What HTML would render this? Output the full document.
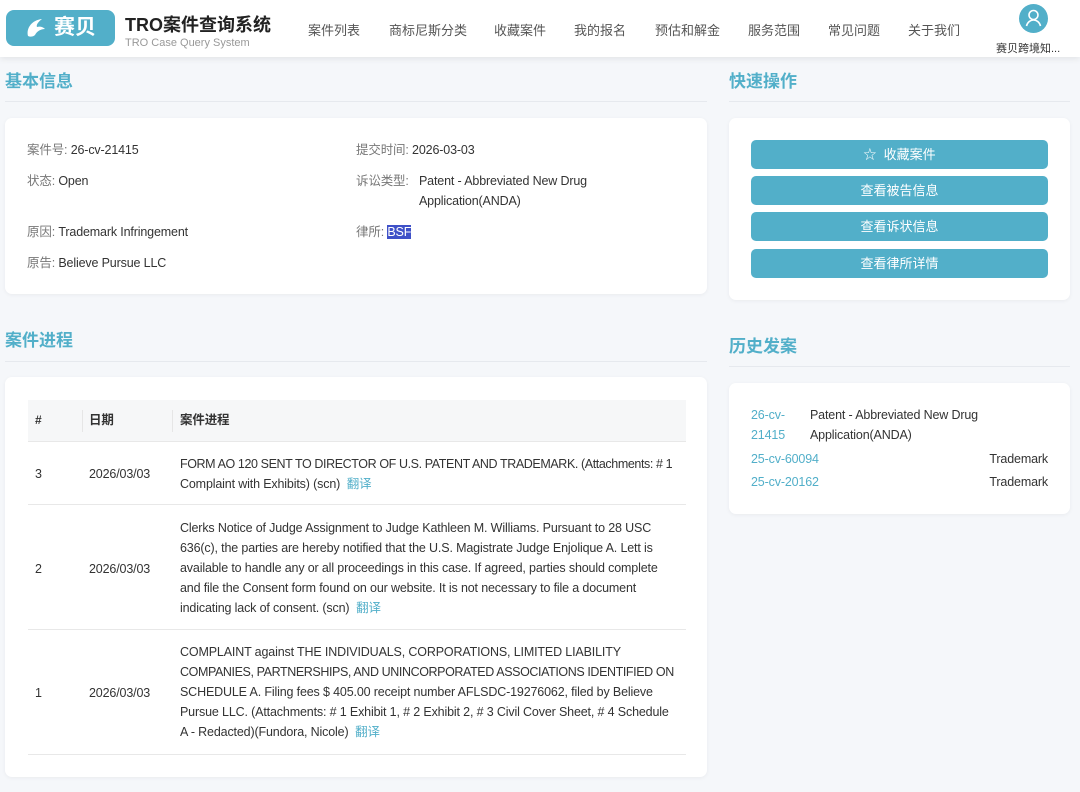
<!DOCTYPE html>
<html><head><meta charset="utf-8"><style>
*{box-sizing:border-box;margin:0;padding:0}
body{width:1080px;height:792px;overflow:hidden;background:#f5f7fa;font-family:"Liberation Sans","Noto Sans CJK SC",sans-serif;color:#333;font-size:13px;position:relative}
.hdr{position:absolute;left:0;top:0;width:1080px;height:57px;background:#fff;box-shadow:0 2px 6px rgba(0,0,0,.08)}
.logo{position:absolute;left:6px;top:10px;width:109px;height:36px;background:#52afc9;border-radius:8px;color:#fff;font-weight:bold;font-size:21px;line-height:36px;padding-left:48px}
.brand{position:absolute;left:125px;top:11px;font-size:18px;font-weight:bold;color:#222}
.brand small{display:block;font-size:11px;font-weight:normal;color:#999;margin-top:0}
.nav{position:absolute;top:20px;font-size:13px;color:#555}
.av{position:absolute;left:1019px;top:4px;width:29px;height:29px;border-radius:50%;background:#52afc9}
.uname{position:absolute;left:996px;top:40px;font-size:11px;color:#333}
.ttl{position:absolute;font-size:17px;font-weight:bold;color:#52afc9}
.ln{position:absolute;height:1px;background:#e6e9ee}
.card{position:absolute;background:#fff;border-radius:7px;box-shadow:0 1px 4px rgba(0,0,0,.05)}
.t{position:absolute;line-height:20px;font-size:12.5px;letter-spacing:-0.15px;color:#333}
.nw{white-space:nowrap}
.c{letter-spacing:-0.4px}
.lb{color:#777}
.btn{position:absolute;left:751px;width:297px;height:29px;background:#52afc9;border-radius:5px;color:#fff;text-align:center;line-height:29px;font-size:13px}
.blue{color:#52afc9}
.row{position:absolute;left:28px;width:658px;border-bottom:1px solid #e8e8e8}
</style></head><body>
<div class="hdr">
<div class="logo"><svg style="position:absolute;left:18px;top:6px" width="26" height="24" viewBox="0 0 26 24"><path d="M4 20C2 12 8 4 18 3c-4 3-6 6-5 8 3-1 6 0 8 2-4 0-8 2-10 6-2 2-5 2-7 1z" fill="#fff"/></svg>赛贝</div>
<div class="brand">TRO案件查询系统<small>TRO Case Query System</small></div>
<div class="nav" style="left:308px">案件列表</div>
<div class="nav" style="left:389px">商标尼斯分类</div>
<div class="nav" style="left:494px">收藏案件</div>
<div class="nav" style="left:574px">我的报名</div>
<div class="nav" style="left:655px">预估和解金</div>
<div class="nav" style="left:748px">服务范围</div>
<div class="nav" style="left:828px">常见问题</div>
<div class="nav" style="left:908px">关于我们</div>
<div class="av"><svg width="29" height="29" viewBox="0 0 29 29"><circle cx="14.5" cy="11" r="4.5" fill="none" stroke="#fff" stroke-width="1.6"/><path d="M7.5 22c1-4 4-6 7-6s6 2 7 6" fill="none" stroke="#fff" stroke-width="1.6"/></svg></div>
<div class="uname">赛贝跨境知...</div>
</div>

<div class="ttl" style="left:5px;top:67px">基本信息</div>
<div class="ln" style="left:5px;top:101px;width:702px"></div>
<div class="card" style="left:5px;top:118px;width:702px;height:176px"></div>
<div class="t" style="left:27px;top:140px"><span class="lb">案件号:</span> 26-cv-21415</div>
<div class="t" style="left:27px;top:171px"><span class="lb">状态:</span> Open</div>
<div class="t" style="left:27px;top:222px"><span class="lb">原因:</span> Trademark Infringement</div>
<div class="t" style="left:27px;top:253px"><span class="lb">原告:</span> Believe Pursue LLC</div>
<div class="t" style="left:356px;top:140px"><span class="lb">提交时间:</span> 2026-03-03</div>
<div class="t" style="left:356px;top:171px"><span class="lb">诉讼类型:</span></div>
<div class="t" style="left:419px;top:171px">Patent - Abbreviated New Drug<br>Application(ANDA)</div>
<div class="t" style="left:356px;top:222px"><span class="lb">律所:</span> <span style="background:#3f51c8;color:#fff">BSF</span></div>

<div class="ttl" style="left:5px;top:326px">案件进程</div>
<div class="ln" style="left:5px;top:361px;width:702px"></div>
<div class="card" style="left:5px;top:377px;width:702px;height:400px"></div>
<div class="row" style="top:400px;height:42px;background:#f6f7f8"></div>
<div style="position:absolute;left:82px;top:410px;width:1px;height:22px;background:#e6e6e6"></div>
<div style="position:absolute;left:172px;top:410px;width:1px;height:22px;background:#e6e6e6"></div>
<div class="t" style="left:35px;top:410px;font-weight:bold;font-size:12px">#</div>
<div class="t" style="left:89px;top:410px;font-weight:bold">日期</div>
<div class="t" style="left:180px;top:410px;font-weight:bold">案件进程</div>
<div class="row" style="top:442px;height:63px"></div>
<div class="row" style="top:505px;height:125px"></div>
<div class="row" style="top:630px;height:125px"></div>
<div class="t" style="left:35px;top:464px">3</div><div class="t" style="left:89px;top:464px">2026/03/03</div>
<div class="t nw" style="left:180px;top:454px"><span class="c">FORM AO 120 SENT TO DIRECTOR OF U.S. PATENT AND TRADEMARK. (Attachments: # 1</span><br>Complaint with Exhibits) (scn) &nbsp;<span class="blue">翻译</span></div>
<div class="t" style="left:35px;top:559px">2</div><div class="t" style="left:89px;top:559px">2026/03/03</div>
<div class="t nw" style="left:180px;top:518px">Clerks Notice of Judge Assignment to Judge Kathleen M. Williams. Pursuant to 28 USC<br>636(c), the parties are hereby notified that the U.S. Magistrate Judge Enjolique A. Lett is<br>available to handle any or all proceedings in this case. If agreed, parties should complete<br>and file the Consent form found on our website. It is not necessary to file a document<br>indicating lack of consent. (scn) &nbsp;<span class="blue">翻译</span></div>
<div class="t" style="left:35px;top:683px">1</div><div class="t" style="left:89px;top:683px">2026/03/03</div>
<div class="t nw" style="left:180px;top:642px">COMPLAINT against THE INDIVIDUALS, CORPORATIONS, LIMITED LIABILITY<br><span class="c">COMPANIES, PARTNERSHIPS, AND UNINCORPORATED ASSOCIATIONS IDENTIFIED ON</span><br>SCHEDULE A. Filing fees $ 405.00 receipt number AFLSDC-19276062, filed by Believe<br>Pursue LLC. (Attachments: # 1 Exhibit 1, # 2 Exhibit 2, # 3 Civil Cover Sheet, # 4 Schedule<br>A - Redacted)(Fundora, Nicole) &nbsp;<span class="blue">翻译</span></div>

<div class="ttl" style="left:729px;top:67px">快速操作</div>
<div class="ln" style="left:729px;top:101px;width:341px"></div>
<div class="card" style="left:729px;top:118px;width:341px;height:182px"></div>
<div class="btn" style="top:140px">☆&nbsp; 收藏案件</div>
<div class="btn" style="top:176px">查看被告信息</div>
<div class="btn" style="top:212px">查看诉状信息</div>
<div class="btn" style="top:249px">查看律所详情</div>

<div class="ttl" style="left:729px;top:332px">历史发案</div>
<div class="ln" style="left:729px;top:366px;width:341px"></div>
<div class="card" style="left:729px;top:383px;width:341px;height:131px"></div>
<div class="t blue" style="left:751px;top:405px">26-cv-<br>21415</div>
<div class="t" style="left:810px;top:405px">Patent - Abbreviated New Drug<br>Application(ANDA)</div>
<div class="t blue" style="left:751px;top:449px">25-cv-60094</div>
<div class="t" style="left:948px;top:449px;width:100px;text-align:right">Trademark</div>
<div class="t blue" style="left:751px;top:472px">25-cv-20162</div>
<div class="t" style="left:948px;top:472px;width:100px;text-align:right">Trademark</div>
</body></html>
